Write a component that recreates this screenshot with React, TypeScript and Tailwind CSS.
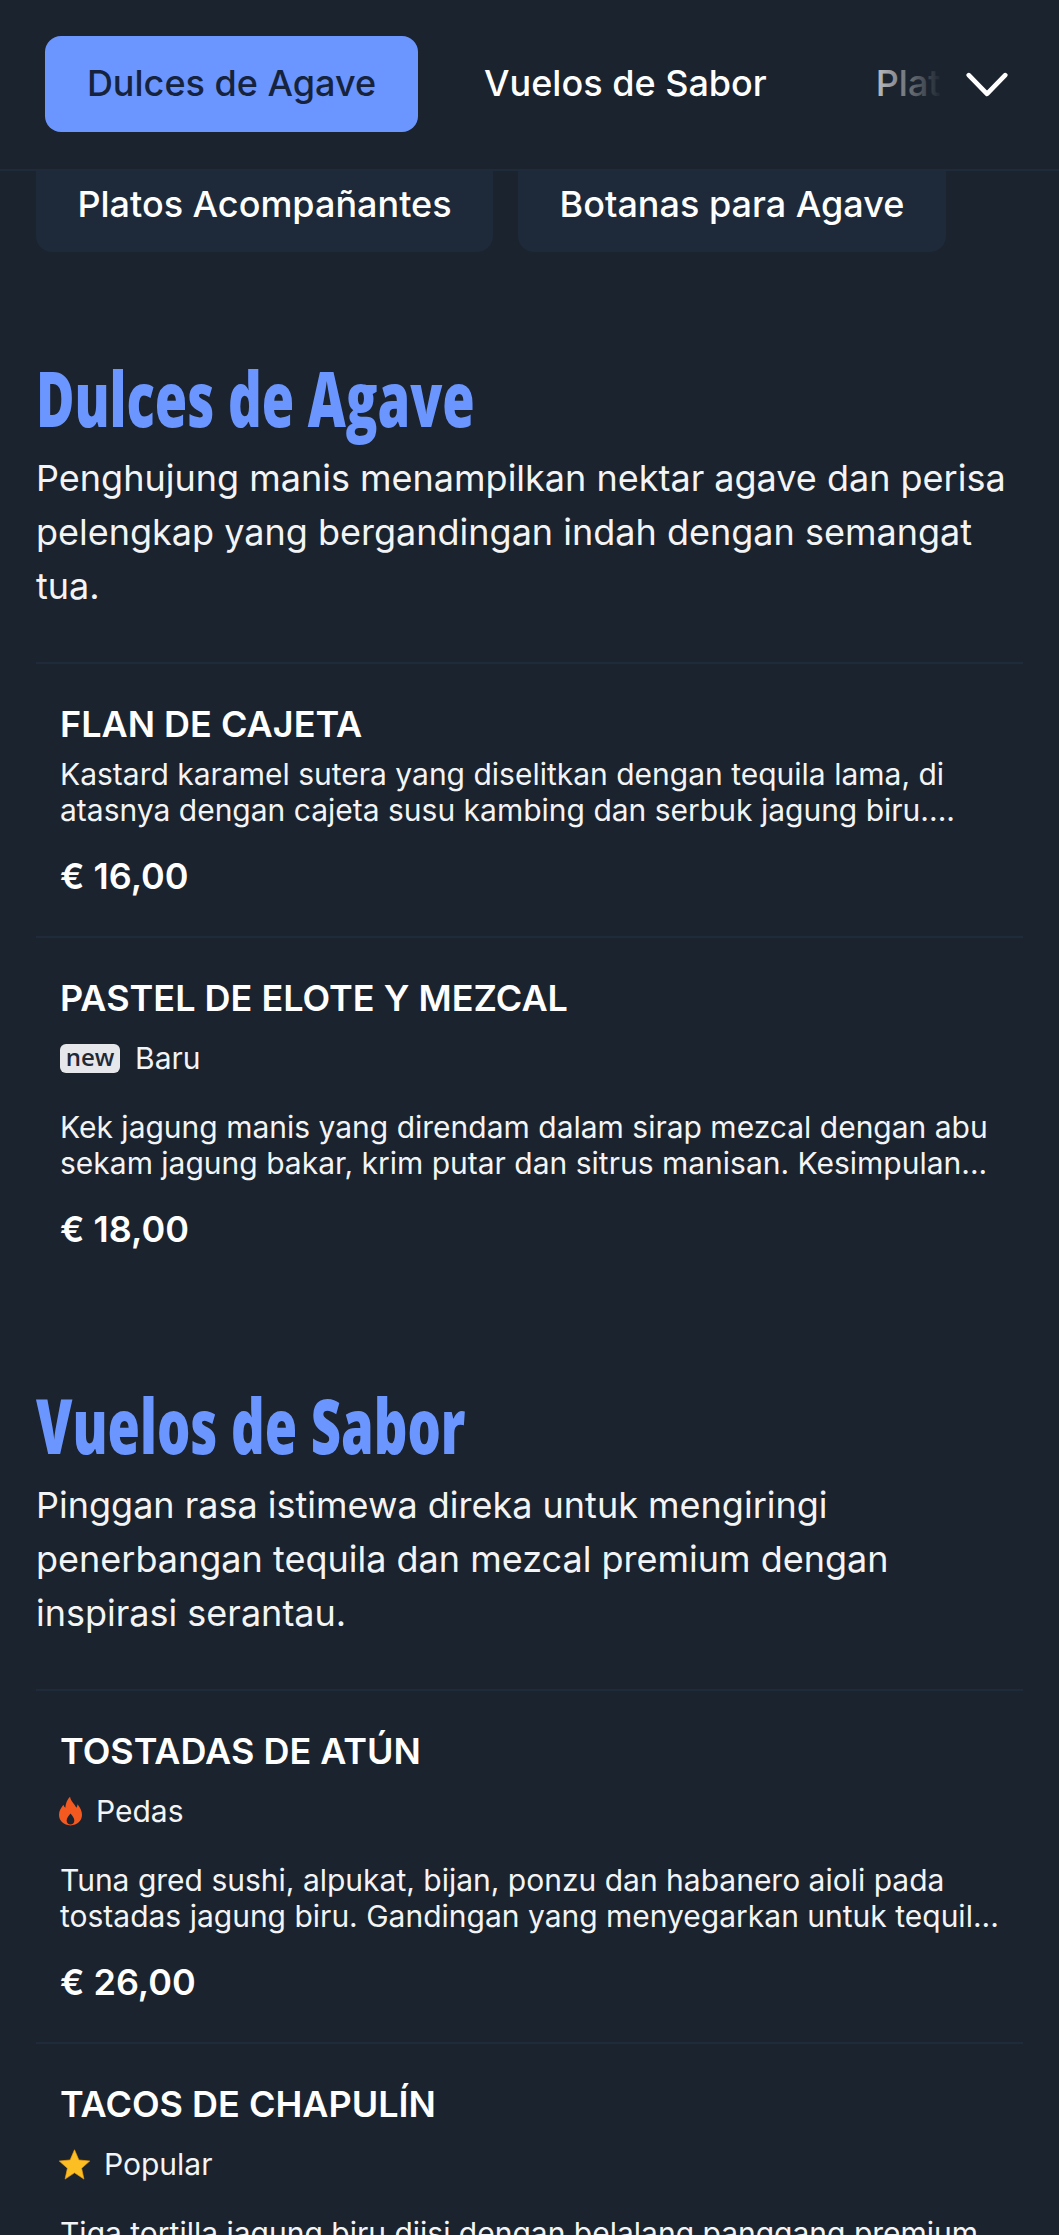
function Star() {
  return (
    <svg viewBox="0 0 24 24" className="w-[31px] h-[31px] shrink-0">
      <path d="M12 .6l3.4 7.9 8.4.8-6.3 5.6 1.8 8.4L12 18.4l-7.3 4.9 1.8-8.4L.2 9.3l8.400-.8z" fill="#fbbf24" stroke="#f59e0b" strokeWidth=".5" strokeLinejoin="round" />
    </svg>
  );
}

function Flame() {
  return (
    <svg viewBox="0 0 24 30" className="w-[23px] h-[30px] shrink-0 -ml-[1px] mr-[14px]">
      <path
        fillRule="evenodd"
        fill="#f4591f"
        d="M11.5 0c1 5 4.500 7.500 6.800 11.500.7-1.100 1-2.300 1-3.600C22 11 24 15 24 19c0 6.500-5 11-12 11S0 25.500 0 19c0-4.500 2.400-7.500 4.600-10.500.4 1.400 1 2.400 2 3.200C6.800 7 8.500 3 11.500 0zM12 17.500c-2 2.500-4 4.800-4 7.300 0 2.500 1.800 4.200 4 4.200s4-1.700 4-4.200c0-2.500-2-4.800-4-7.300z"
      />
    </svg>
  );
}

function Tag({ kind }: { kind: "new" | "hot" | "pop" }) {
  if (kind === "new") {
    return (
      <div className="flex items-center h-[48px] mt-[12px] mb-[27px] text-[30px] text-[#f3f4f6]">
        <span
          className="w-[60px] h-[29px] rounded-[6px] bg-[#e5e7eb] text-[#1f2937] text-[24px] font-semibold leading-[25px] text-center mr-[15px]"
          style={{ fontFamily: "'Open Sans', sans-serif" }}
        >
          new
        </span>
        Baru
      </div>
    );
  }
  if (kind === "hot") {
    return (
      <div className="flex items-center h-[48px] mt-[12px] mb-[27px] text-[30px] text-[#f3f4f6]">
        <Flame />
        Pedas
      </div>
    );
  }
  return (
    <div className="flex items-center h-[48px] mt-[12px] mb-[27px] text-[30px] text-[#f3f4f6]">
      <span className="-ml-[1px] mr-[14px] flex"><Star /></span>
      Popular
    </div>
  );
}

function Item({ name, tag, desc, price }: { name: string; tag?: "new" | "hot" | "pop"; desc: string[]; price?: string }) {
  return (
    <div className="border-t-2 border-[#1f2b3a] px-[24px] pt-[36px] pb-[36px]">
      <h3 className="text-[36px] leading-[48px] font-semibold text-white">{name}</h3>
      {tag ? <Tag kind={tag} /> : <div className="h-[8px]" />}
      <p className="text-[30px] leading-[36px] text-[#f3f4f6] whitespace-nowrap">
        {desc.map((l) => (
          <span key={l} className="block">{l}</span>
        ))}
      </p>
      {price && <div className="mt-[24px] text-[36px] leading-[48px] font-semibold text-white">{price}</div>}
    </div>
  );
}

function Section({ title, intro, children }: { title: string; intro: string; children: React.ReactNode }) {
  return (
    <section className="mb-[92px]">
      <h2
        className="text-[76px] leading-[88px] font-extrabold text-[#6b96ff] origin-left scale-x-[0.69] whitespace-nowrap"
        style={{ fontFamily: "'Open Sans','Liberation Sans',sans-serif" }}
      >
        {title}
      </h2>
      <p className="mt-[9px] mb-[49px] text-[36px] leading-[54px] text-[#f3f4f6]">{intro}</p>
      {children}
    </section>
  );
}

export default function App() {
  return (
    <div className="h-[2235px] overflow-hidden bg-[#1b232e]" style={{ fontFamily: "Inter, 'Liberation Sans', sans-serif" }}>
      <header className="relative z-10 h-[171px] border-b-2 border-[#1f2b3a] bg-[#1b232e] flex items-start overflow-hidden pl-[45px] pt-[36px]">
        <div className="flex gap-[24px] text-[36px] font-medium whitespace-nowrap">
          <div className="h-[96px] w-[373px] rounded-[16px] bg-[#6b96ff] text-[#16233c] flex items-center justify-center pb-[2px]">Dulces de Agave</div>
          <div className="h-[96px] px-[42px] text-white flex items-center pb-[2px]">Vuelos de Sabor</div>
          <div className="h-[96px] px-[43px] text-white flex items-center pb-[2px]">Platos Acompañantes</div>
        </div>
        <div className="absolute right-0 top-0 h-[170px] w-[212px] flex items-center justify-end pr-[51px] pb-[2px] bg-gradient-to-r from-transparent to-[#1b232e] to-45%">
          <svg viewBox="0 0 40 24" className="w-[42px] h-[25px] text-white" fill="none" stroke="currentColor" strokeWidth="4.500" strokeLinecap="round" strokeLinejoin="round">
            <path d="M2.500 3L20 21 37.500 3" />
          </svg>
        </div>
      </header>

      <div className="-mt-[15px] px-[36px] flex gap-[25px] text-[36px] font-medium text-white whitespace-nowrap">
        <div className="h-[96px] w-[457px] rounded-[16px] bg-[#1e2a3a] flex items-center justify-center">Platos Acompañantes</div>
        <div className="h-[96px] w-[428px] rounded-[16px] bg-[#1e2a3a] flex items-center justify-center">Botanas para Agave</div>
      </div>

      <main className="px-[36px] pt-[102px]">
        <Section
          title="Dulces de Agave"
          intro="Penghujung manis menampilkan nektar agave dan perisa pelengkap yang bergandingan indah dengan semangat tua."
        >
          <Item
            name="FLAN DE CAJETA"
            desc={["Kastard karamel sutera yang diselitkan dengan tequila lama, di", "atasnya dengan cajeta susu kambing dan serbuk jagung biru...."]}
            price="€ 16,00"
          />
          <Item
            name="PASTEL DE ELOTE Y MEZCAL"
            tag="new"
            desc={["Kek jagung manis yang direndam dalam sirap mezcal dengan abu", "sekam jagung bakar, krim putar dan sitrus manisan. Kesimpulan..."]}
            price="€ 18,00"
          />
        </Section>
        <Section
          title="Vuelos de Sabor"
          intro="Pinggan rasa istimewa direka untuk mengiringi penerbangan tequila dan mezcal premium dengan inspirasi serantau."
        >
          <Item
            name="TOSTADAS DE ATÚN"
            tag="hot"
            desc={["Tuna gred sushi, alpukat, bijan, ponzu dan habanero aioli pada", "tostadas jagung biru. Gandingan yang menyegarkan untuk tequil..."]}
            price="€ 26,00"
          />
          <Item
            name="TACOS DE CHAPULÍN"
            tag="pop"
            desc={["Tiga tortilla jagung biru diisi dengan belalang panggang premium,"]}
          />
        </Section>
      </main>
    </div>
  );
}
